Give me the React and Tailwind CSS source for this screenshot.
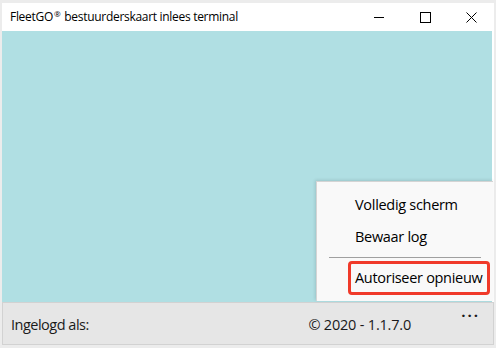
const font = { fontFamily: '"Open Sans", "Noto Sans", sans-serif' };

const TitleBar = () => (
  <div className="h-[28px] bg-white flex items-center">
    <span className="pl-[8px] text-[12px] text-black tracking-[-0.3px] flex-1 whitespace-nowrap">
      FleetGO<sup className="text-[8px] ml-[1px] mr-[4px]">®</sup>bestuurderskaart inlees terminal
    </span>
    <div className="flex items-center h-full">
      <div className="w-[46px] h-full flex items-center justify-center">
        <svg width="11" height="11" viewBox="0 0 11 11"><path d="M0 5.5H10" stroke="#000" strokeWidth="1" /></svg>
      </div>
      <div className="w-[46px] h-full flex items-center justify-center">
        <svg width="11" height="11" viewBox="0 0 11 11"><rect x="0.5" y="0.5" width="10" height="10" fill="none" stroke="#000" /></svg>
      </div>
      <div className="w-[46px] h-full flex items-center justify-center">
        <svg width="11" height="11" viewBox="0 0 11 11"><path d="M0.5 0.5L10.5 10.5M10.5 0.5L0.5 10.5" stroke="#000" strokeWidth="1" /></svg>
      </div>
    </div>
  </div>
);

const Menu = () => (
  <div className="absolute left-[316px] top-[181px] w-[177px] h-[120px] bg-[#f9f9f9] border-l border-t border-[#d4d4d4] shadow-[-1px_-1px_3px_rgba(0,0,0,0.12)] flex flex-col text-[14.5px] tracking-[-0.3px] text-black whitespace-nowrap">
    <div className="mt-[7px] h-[32px] flex items-center pl-[38px]">Volledig scherm</div>
    <div className="h-[32px] flex items-center pl-[38px]">Bewaar log</div>
    <div className="mx-[12px] mt-[4px] h-px bg-[#a0a0a0]" />
    <div className="mt-[3px] ml-[31px] mr-[3px] h-[34px] border-[3px] border-[#f03a2a] rounded-[4px] flex items-center pl-[4px]">
      Autoriseer opnieuw
    </div>
  </div>
);

export default function App() {
  return (
    <div className="relative w-[496px] h-[348px] bg-[#ececec] pt-[3px] px-[2px] pb-[3px] flex flex-col" style={font}>
      <TitleBar />
      <div className="flex-1 bg-[#b0dfe3] border-r-[2px] border-white" />
      <div className="h-[43px] bg-[#e6e6e6] border border-[#d2d2d2] flex items-center text-[14.5px] tracking-[-0.2px] text-[#1a1a1a] relative whitespace-nowrap">
        <span className="pl-[8px] pt-[2px] flex-1 tracking-[-0.5px]">Ingelogd als:</span>
        <span className="pr-[82px] pt-[2px]">© 2020 - 1.1.7.0</span>
        <span className="absolute right-[13px] top-[-3px] text-[15px] tracking-[2px] font-bold">...</span>
      </div>
      <Menu />
    </div>
  );
}
